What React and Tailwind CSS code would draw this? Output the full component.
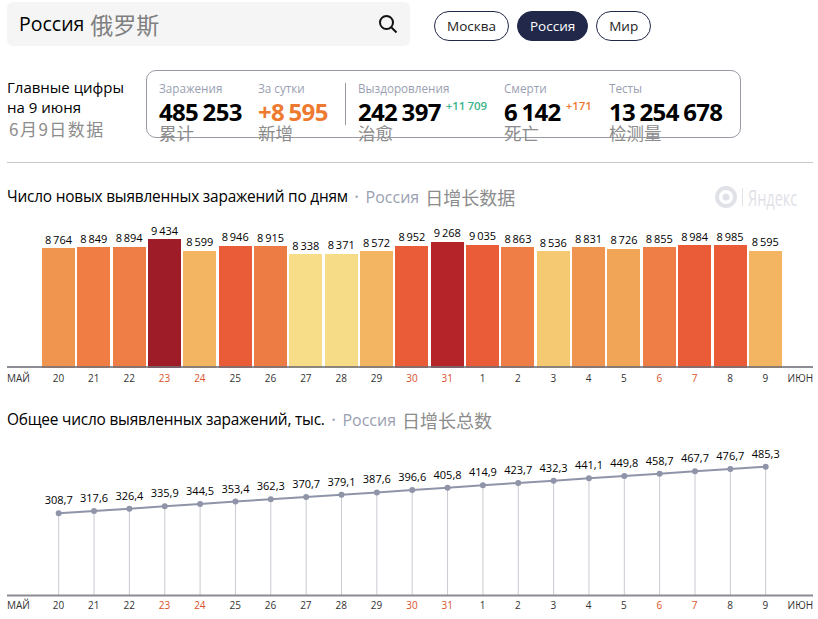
import React from "react";

const FONT = "font-['Open_Sans','Noto_Sans_CJK_SC',sans-serif]";
const CJK = "font-['Noto_Sans_CJK_SC',sans-serif]";

const DAYS = [
    { day: "20", value: 8764, total: "308,7", color: "#f0954f" },
    { day: "21", value: 8849, total: "317,6", color: "#ef7d44" },
    { day: "22", value: 8894, total: "326,4", color: "#ee7e45" },
    { day: "23", value: 9434, total: "335,9", color: "#9e1c27", off: true },
    { day: "24", value: 8599, total: "344,5", color: "#f4b562", off: true },
    { day: "25", value: 8946, total: "353,4", color: "#e95c37" },
    { day: "26", value: 8915, total: "362,3", color: "#ec7c44" },
    { day: "27", value: 8338, total: "370,7", color: "#f7dd88" },
    { day: "28", value: 8371, total: "379,1", color: "#f7dc87" },
    { day: "29", value: 8572, total: "387,6", color: "#f4b562" },
    { day: "30", value: 8952, total: "396,6", color: "#e95c37", off: true },
    { day: "31", value: 9268, total: "405,8", color: "#b52428", off: true },
    { day: "1", value: 9035, total: "414,9", color: "#e95c37" },
    { day: "2", value: 8863, total: "423,7", color: "#ee7e45" },
    { day: "3", value: 8536, total: "432,3", color: "#f5c872" },
    { day: "4", value: 8831, total: "441,1", color: "#f0954f" },
    { day: "5", value: 8726, total: "449,8", color: "#f1a557" },
    { day: "6", value: 8855, total: "458,7", color: "#ee7e45", off: true },
    { day: "7", value: 8984, total: "467,7", color: "#e95c37", off: true },
    { day: "8", value: 8985, total: "476,7", color: "#e95c37" },
    { day: "9", value: 8595, total: "485,3", color: "#f4b562" },
];

const fmt = (n) => String(n).replace(/\B(?=(\d{3})+$)/g, " ");

const Pill = ({ active, children }) => (
    <div
        className={`h-[30px] flex items-center px-[12px] rounded-[15px] border border-[#22284a] text-[13.5px] ${
            active ? "bg-[#22284a] text-white" : "bg-white text-[#222]"
        }`}
    >
        {children}
    </div>
);

const Stat = ({ width, label, value, valueColor = "text-black", delta, deltaColor, caption }) => (
    <div className={`${width} shrink-0`}>
        <div className="text-[11.7px] leading-[16px] text-[#9a9fb2]">{label}</div>
        <div className="flex items-start mt-[1px]">
            <span className={`text-[24px] leading-[30px] font-bold tracking-[-0.7px] [word-spacing:-1px] whitespace-nowrap ${valueColor}`}>{value}</span>
            {delta && <span className={`text-[11.5px] leading-[16px] mt-[1px] ml-[5px] font-semibold [word-spacing:-1px] whitespace-nowrap ${deltaColor}`}>{delta}</span>}
        </div>
        <div className={`${CJK} text-[17.5px] leading-[20px] -mt-[4px] text-[#8c8c8c]`}>{caption}</div>
    </div>
);

const Heading = ({ title, cn }) => (
    <div className="flex items-center h-[24px]">
        <span className="text-[15.4px] text-black tracking-[-0.2px]">{title}</span>
        <span className="text-[#9a9fb2] ml-[7px] mr-[7px] text-[10px]">•</span>
        <span className="text-[16px] text-[#9a9fb2]">Россия</span>
        <span className={`${CJK} text-[18px] text-[#8c8c8c] ml-[6px]`}>{cn}</span>
    </div>
);

const AxisLabels = () => (
    <div className="flex items-center h-[20px] text-[10px] text-[#333]">
        <div className="w-[33.8px] shrink-0">МАЙ</div>
        {DAYS.map((d) => (
            <div key={d.day} className={`flex-1 text-center ${d.off ? "text-[#d9512c]" : ""}`}>
                {d.day}
            </div>
        ))}
        <div className="w-[30px] shrink-0 text-right">ИЮН</div>
    </div>
);

const BarChart = () => (
    <div className="relative flex items-end h-[161px] mt-[-2px]">
        <div className="w-[33.8px] shrink-0" />
        {DAYS.map((d) => (
            <div key={d.day} className="flex-1 flex flex-col items-center">
                <div className="text-[11px] leading-[14px] mb-[1.5px] text-black whitespace-nowrap [word-spacing:-1px]">{fmt(d.value)}</div>
                <div className="w-[33px]" style={{ height: d.value * 0.01365, background: d.color }} />
            </div>
        ))}
        <div className="w-[30px] shrink-0" />
        <div className="absolute left-0 right-0 bottom-0 h-[2px] bg-[#6f7079]/80" />
    </div>
);

// chart area is 806 wide, baseline at the bottom of the box
const LineChart = () => {
    const H = 162;
    const x = (i) => 51.7 + i * 35.35;
    const y = (d) => H - parseFloat(d.total.replace(",", ".")) * 0.2645;
    const pts = DAYS.map((d, i) => `${x(i)},${y(d)}`).join(" ");
    return (
        <svg width="806" height={H + 2} viewBox={`0 0 806 ${H + 2}`} className="block">
            {DAYS.map((d, i) => (
                <line key={d.day} x1={x(i)} x2={x(i)} y1={y(d)} y2={H} stroke="#c9cad2" strokeWidth="1" />
            ))}
            <line x1="0" x2="806" y1={H + 0.5} y2={H + 0.5} stroke="#8b8b93" strokeWidth="2" />
            <polyline points={pts} fill="none" stroke="#8f94a8" strokeWidth="2" />
            {DAYS.map((d, i) => (
                <g key={d.day}>
                    <circle cx={x(i)} cy={y(d)} r="3" fill="#8f94a8" />
                    <text x={x(i)} y={y(d) - 9} textAnchor="middle" fontSize="11" fill="#000">
                        {d.total}
                    </text>
                </g>
            ))}
        </svg>
    );
};

export default function App() {
    return (
        <div className={`${FONT} w-[818px] h-[619px] overflow-hidden bg-white pl-[7px] pr-[5px] pt-[2px]`}>
            <div className="flex items-center">
                <div className="w-[403px] h-[44px] bg-[#f5f5f5] rounded-[6px] flex items-center pl-[12px] pr-[12px]">
                    <span className="text-[19.5px] text-black">Россия</span>
                    <span className={`${CJK} text-[23px] text-[#808080] ml-[6px]`}>俄罗斯</span>
                    <svg width="20" height="20" viewBox="0 0 20 20" className="ml-auto" fill="none" stroke="#111" strokeWidth="2">
                        <circle cx="8.5" cy="8.5" r="6.5" />
                        <path d="M13.5 13.5 18.5 18.5" />
                    </svg>
                </div>
                <div className="flex gap-[8px] ml-[24px] mt-[9px] self-start">
                    <Pill>Москва</Pill>
                    <Pill active>Россия</Pill>
                    <Pill>Мир</Pill>
                </div>
            </div>

            <div className="flex mt-[24px] h-[68px]">
                <div className="w-[139px] shrink-0 text-[15px] leading-[20px] pt-[7px] text-black">
                    <div>Главные цифры</div>
                    <div>на 9 июня</div>
                    <div className={`${CJK} text-[17px] leading-[23px] text-[#8c8c8c] pl-[2px] tracking-[1.5px]`}>6月9日数据</div>
                </div>
                <div className="w-[595px] h-[68px] border border-[#9a9aa5] rounded-[10px] flex pl-[12px] pt-[9px]">
                    <Stat width="w-[99px]" label="Заражения" value="485 253" caption="累计" />
                    <Stat width="w-[87px]" label="За сутки" value="+8 595" valueColor="text-[#ee7a31]" caption="新增" />
                    <div className="w-[1px] h-[42px] bg-[#9a9aa5] mt-[3px] mr-[12px] shrink-0" />
                    <Stat width="w-[146px]" label="Выздоровления" value="242 397" delta="+11 709" deltaColor="text-[#3bb48c]" caption="治愈" />
                    <Stat width="w-[105px]" label="Смерти" value="6 142" delta="+171" deltaColor="text-[#ee7a31]" caption="死亡" />
                    <Stat width="w-[130px]" label="Тесты" value="13 254 678" caption="检测量" />
                </div>
            </div>

            <div className="h-[1px] bg-[#c8c8c8] mt-[24px]" />

            <div className="relative mt-[22px]">
                <Heading title="Число новых выявленных заражений по дням" cn="日增长数据" />
                <div className="absolute right-[15px] top-0 flex items-center h-[24px] text-[#dfe1e7]">
                    <svg width="22" height="22" viewBox="0 0 22 22" fill="none">
                        <circle cx="11" cy="11" r="9" stroke="#e0e2e8" strokeWidth="4" />
                        <circle cx="11" cy="11" r="3.5" fill="#e0e2e8" />
                    </svg>
                    <div className="w-[1px] h-[18px] bg-[#e0e2e8] ml-[5px]" />
                    <span className="text-[22px] scale-x-[0.66] origin-left ml-[5px] w-[50px] whitespace-nowrap">Яндекс</span>
                </div>
            </div>

            <BarChart />
            <AxisLabels />

            <div className="mt-[20px]">
                <Heading title="Общее число выявленных заражений, тыс." cn="日增长总数" />
            </div>
            <div className="mt-[1px]">
                <LineChart />
            </div>
            <div className="-mt-[2px]">
                <AxisLabels />
            </div>
        </div>
    );
}
